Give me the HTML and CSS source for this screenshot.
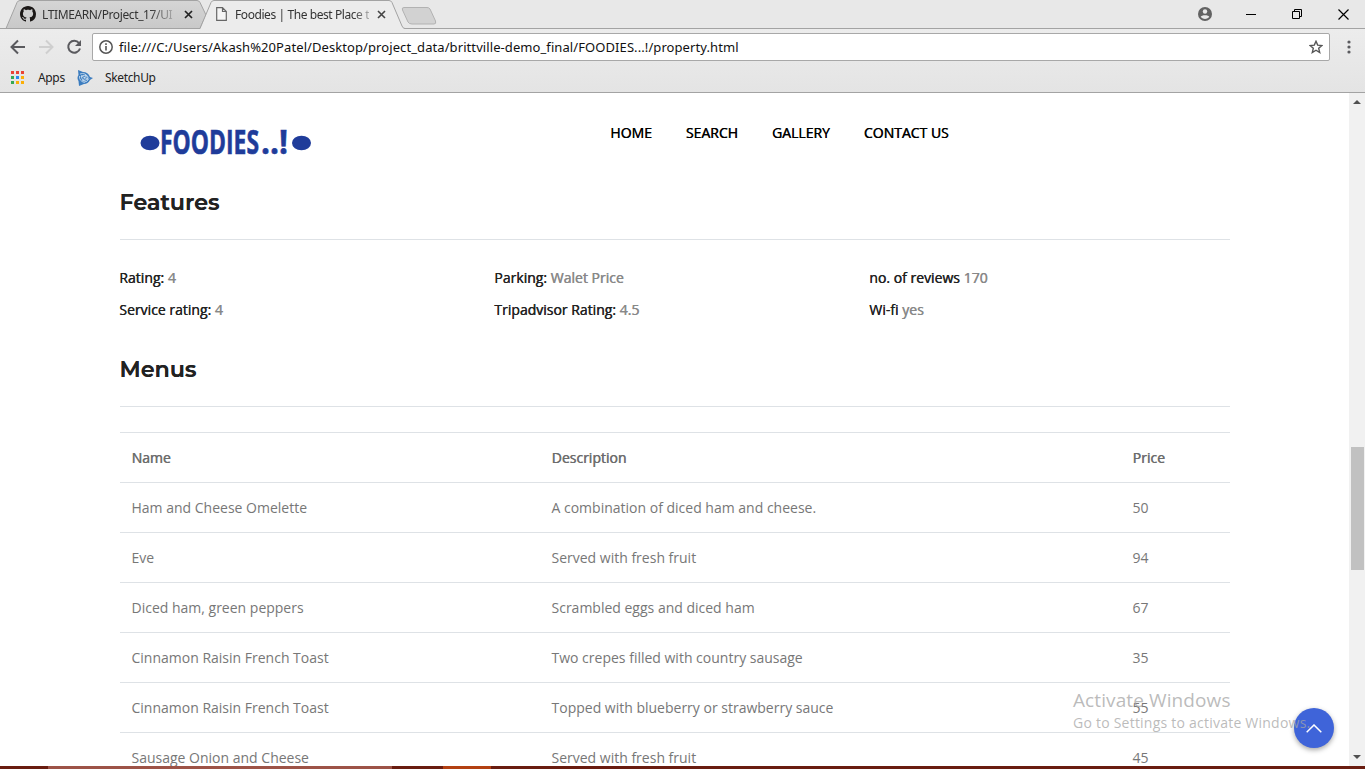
FILE: index.html
```html
<!DOCTYPE html>
<html lang="en">
<head>
<meta charset="utf-8">
<title>Foodies | The best Place to eat</title>
<link rel="stylesheet" href="styles.css">
</head>
<body>
<div class="browser">
  <div class="tabstrip">
    <svg class="tab-shapes" width="450" height="29" viewBox="0 0 450 29">
      <defs><linearGradient id="idle" x1="0" y1="0" x2="0" y2="1"><stop offset="0" stop-color="#d5d5d5"/><stop offset="1" stop-color="#c9c9c9"/></linearGradient></defs>
      <path d="M0 28.500H450" stroke="#a3a3a3"/>
      <path d="M6 28.500L17 2.500Q18 .5 20 .5H197Q199 .5 200 2.500L206 15L200 28.500Z" fill="url(#idle)" stroke="#a3a3a3"/>
      <path d="M200 29L211 2.500Q212 .5 214 .5H389Q391 .5 392 2.500L402 26Q403 28.500 405 29Z" fill="#ececec"/>
      <path d="M200 28.500L211 2.500Q212 .5 214 .5H389Q391 .5 392 2.500L402 26Q403 28.500 405 28.500" fill="none" stroke="#a3a3a3"/>
      <path d="M404 7.500H427Q429 7.500 430 9L435.500 21Q436.500 24 434 24H412Q409 24 408 22L402.500 10Q401.500 7.500 404 7.500Z" fill="#d2d2d2" stroke="#b2b2b2"/>
    </svg>
    <div class="tab tab-idle">
      <svg width="16" height="16" viewBox="0 0 16 16"><path fill="#1b1817" d="M8 0C3.580 0 0 3.580 0 8c0 3.540 2.290 6.530 5.470 7.590.4.070.55-.17.55-.38 0-.19-.01-.82-.01-1.490-2.010.37-2.530-.49-2.690-.94-.09-.23-.48-.94-.82-1.130-.28-.15-.68-.52-.01-.53.63-.01 1.080.58 1.230.82.72 1.210 1.870.87 2.330.66.070-.52.28-.87.510-1.070-1.780-.2-3.640-.89-3.640-3.950 0-.87.310-1.590.82-2.150-.08-.2-.36-1.020.080-2.120 0 0 .67-.21 2.200.82.64-.18 1.320-.27 2-.27s1.360.090 2 .27c1.530-1.040 2.200-.82 2.200-.82.440 1.100.160 1.920.080 2.120.510.560.820 1.270.820 2.150 0 3.070-1.870 3.750-3.650 3.950.290.250.540.730.540 1.480 0 1.070-.01 1.930-.01 2.200 0 .21.150.46.550.38A8.010 8.010 0 0 0 16 8c0-4.420-3.580-8-8-8z"/></svg>
      <span class="tab-title t1">LTIMEARN/Project_17/UI</span>
      <svg class="x" width="9" height="9" viewBox="0 0 9 9"><path d="M1 1L8 8M8 1L1 8" stroke="#222" stroke-width="1.700"/></svg>
    </div>
    <div class="tab tab-active">
      <svg width="11" height="14" viewBox="0 0 11 14"><path d="M.7.700H6.500L10.300 4.500V13.300H.7ZM6.500.700V4.500H10.300" fill="#f5f5f5" stroke="#666" stroke-width="1.200"/></svg>
      <span class="tab-title t2">Foodies | The best Place t</span>
      <svg class="x" width="9" height="9" viewBox="0 0 9 9"><path d="M1 1L8 8M8 1L1 8" stroke="#444" stroke-width="1.600"/></svg>
    </div>
    <div class="window-buttons">
      <svg width="14" height="14" viewBox="0 0 14 14"><circle cx="7" cy="7" r="7" fill="#626262"/><circle cx="7" cy="4.500" r="2.200" fill="#e8e8e8"/><path d="M2.700 10C3 7.500 11 7.500 11.300 10Q7 14 2.700 10Z" fill="#e8e8e8"/></svg>
      <svg class="min" width="10" height="11" viewBox="0 0 10 11"><path d="M0 5.500H10" stroke="#000"/></svg>
      <svg width="11" height="11" viewBox="0 0 11 11"><path d="M.5 2.500H7.500V9.500H.5ZM2.500 2.500V.5H9.500V7.500H7.500" fill="none" stroke="#000"/></svg>
      <svg width="11" height="11" viewBox="0 0 11 11"><path d="M.5.500L10.500 10.500M10.500.500L.5 10.500" stroke="#000" stroke-width="1.200"/></svg>
    </div>
  </div>
  <div class="toolbar">
    <svg class="nav-icons" width="92" height="34" viewBox="0 0 92 34">
      <path d="M25 18H12M18 11.500L11.500 18L18 24.500" fill="none" stroke="#5a5a5e" stroke-width="2"/>
      <path d="M39 18H52M46 11.500L52.500 18L46 24.500" fill="none" stroke="#cfcfcf" stroke-width="2"/>
      <path d="M79 14A6 6 0 1 0 80 19.500" fill="none" stroke="#5a5a5e" stroke-width="2"/><path d="M81 11V17H75Z" fill="#5a5a5e"/>
    </svg>
    <div class="address">
      <svg width="14" height="14" viewBox="0 0 14 14"><circle cx="7" cy="7" r="6.200" fill="none" stroke="#555" stroke-width="1.500"/><path d="M7 6V10.500M7 3.300V5" stroke="#555" stroke-width="1.600"/></svg>
      <span class="url">file:///C:/Users/Akash%20Patel/Desktop/project_data/brittville-demo_final/FOODIES...!/property.html</span>
      <svg class="star" width="14" height="14" viewBox="0 0 14 14"><path d="M7 1.300L8.700 5.100L12.900 5.500L9.700 8.300L10.700 12.500L7 10.200L3.300 12.500L4.300 8.300L1.100 5.500L5.300 5.100Z" fill="none" stroke="#555" stroke-width="1.400"/></svg>
    </div>
    <svg class="dots" width="4" height="14" viewBox="0 0 4 14"><circle cx="2" cy="2" r="1.600" fill="#5a5a5e"/><circle cx="2" cy="7" r="1.600" fill="#5a5a5e"/><circle cx="2" cy="12" r="1.600" fill="#5a5a5e"/></svg>
  </div>
  <div class="bookmarks">
    <svg width="13" height="13" viewBox="0 0 13 13"><path d="M0 0h3v3H0zM5 0h3v3H5zM10 0h3v3h-3z" fill="#ea4335"/><path d="M0 5h3v3H0zM0 10h3v3H0z" fill="#34a853"/><path d="M5 5h3v3H5z" fill="#2a8af0"/><path d="M5 10h3v3H5zM10 5h3v3h-3zM10 10h3v3h-3z" fill="#fbaf08"/></svg>
    <span class="bm apps">Apps</span>
    <svg class="su" width="16" height="16" viewBox="0 0 16 16"><path d="M1 0L6 2Q11 2 13 7L16 8L13 10Q11 14 7 14L2 16L1.500 11Q-.5 8 1.500 5Z" fill="#3b7cbf"/><path d="M3 4Q8 2 11.500 7.500M2.500 6Q2 11 7.500 12.500M12 8.500Q10 12.500 7 12M4 6L9 5L11 9L6 11ZM4 6L11 9M9 5L6 11" fill="none" stroke="#d4e4f3" stroke-width=".8"/></svg>
    <span class="bm">SketchUp</span>
  </div>
</div>
<div class="viewport">
  <main class="page">
    <header class="site-header">
      <svg class="logo" width="180" height="36" viewBox="0 0 180 36">
        <g fill="#1f3c9a"><ellipse cx="18" cy="18" rx="9.500" ry="7.300"/><ellipse cx="169.500" cy="18" rx="9.500" ry="7.300"/></g>
        <text class="logo-text" x="28" y="29" textLength="99" lengthAdjust="spacingAndGlyphs">FOODIES</text>
        <text class="logo-text" x="129" y="29" textLength="27" lengthAdjust="spacingAndGlyphs">..!</text>
      </svg>
      <nav class="menu"><a>HOME</a><a>SEARCH</a><a>GALLERY</a><a>CONTACT US</a></nav>
    </header>
    <h2 class="title">Features</h2>
    <div class="features">
      <div>Rating: <span>4</span></div><div>Parking: <span>Walet Price</span></div><div>no. of reviews <span>170</span></div>
      <div>Service rating: <span>4</span></div><div>Tripadvisor Rating: <span>4.5</span></div><div>Wi-fi <span>yes</span></div>
    </div>
    <h2 class="title">Menus</h2>
    <div class="menu-table">
      <div class="row head"><span>Name</span><span>Description</span><span>Price</span></div>
      <div class="row"><span>Ham and Cheese Omelette</span><span>A combination of diced ham and cheese.</span><span>50</span></div>
      <div class="row"><span>Eve</span><span>Served with fresh fruit</span><span>94</span></div>
      <div class="row"><span>Diced ham, green peppers</span><span>Scrambled eggs and diced ham</span><span>67</span></div>
      <div class="row"><span>Cinnamon Raisin French Toast</span><span>Two crepes filled with country sausage</span><span>35</span></div>
      <div class="row"><span>Cinnamon Raisin French Toast</span><span>Topped with blueberry or strawberry sauce</span><span>55</span></div>
      <div class="row"><span>Sausage Onion and Cheese</span><span>Served with fresh fruit</span><span>45</span></div>
    </div>
  </main>
  <div class="scrollbar">
    <svg width="8" height="4" viewBox="0 0 8 4"><path d="M0 4L4 0L8 4Z" fill="#505050"/></svg>
    <div class="thumb"></div>
    <svg class="down" width="8" height="4" viewBox="0 0 8 4"><path d="M0 0L4 4L8 0Z" fill="#505050"/></svg>
  </div>
</div>
<div class="taskbar"><i class="window-hint"></i><i class="active-hint"></i></div>
<div class="to-top"><svg width="16" height="9" viewBox="0 0 16 9"><path d="M.7 8.300L8 1L15.300 8.300" fill="none" stroke="#fff" stroke-width="1.500"/></svg></div>
<div class="watermark"><div class="w1">Activate Windows</div><div class="w2">Go to Settings to activate Windows.</div></div>
</body>
</html>
```
FILE: styles.css
```css
* { box-sizing: border-box; }
body { margin: 0; width: 1365px; height: 769px; overflow: hidden; position: relative; display: flex; flex-direction: column; background: #fff; font-family: "Open Sans", sans-serif; }
svg { display: block; flex: none; }
.browser { height: 93px; flex: none; border-bottom: 1px solid #a3a3a3; background: linear-gradient(#ececec 29px, #e4e4e4); white-space: nowrap; }
.tabstrip { height: 29px; display: flex; align-items: center; position: relative; border-bottom: 1px solid #a3a3a3; background: #e8e8e8; }
.tab-shapes { position: absolute; left: 0; top: 0; }
.tab { position: relative; display: flex; align-items: center; height: 29px; }
.tab-idle { width: 216px; padding-left: 20px; }
.tab-active { width: 200px; }
.tab-title { font-family: "Noto Sans", sans-serif; font-size: 12px; }
.t1 { margin-left: 6px; width: 131px; color: #333; letter-spacing: -.38px; mask-image: linear-gradient(90deg, #000 108px, transparent 138px); }
.t2 { margin-left: 8px; width: 134px; color: #333; letter-spacing: -.42px; mask-image: linear-gradient(90deg, #000 118px, transparent 142px); }
.x { margin-left: 11px; margin-top: 1px; }
.tab-active .x { margin-left: 8px; }
.window-buttons { margin-left: auto; display: flex; align-items: center; padding-right: 16px; gap: 35px; }
.min { margin-left: -1px; margin-right: 1px; }
.toolbar { height: 34px; display: flex; }
.address { margin-top: 4px; height: 28px; width: 1238px; display: flex; align-items: center; background: #fff; border: 1px solid #a8a8a8; border-radius: 2px; padding: 0 6px; }
.url { margin-left: 6px; font-family: "Noto Sans", sans-serif; font-size: 13px; color: #111; letter-spacing: .084px; }
.star { margin-left: auto; }
.dots { margin: 11px 0 0 17px; }
.bookmarks { display: flex; align-items: center; height: 29px; padding-left: 11px; }
.bm { font-family: "Noto Sans", sans-serif; font-size: 12px; color: #222; letter-spacing: -.35px; }
.apps { margin-left: 14px; width: 39px; }
.su { margin-right: 12px; }
.viewport { flex: none; height: 673px; display: flex; overflow: hidden; }
.page { width: 1349px; padding: 0 119px 0 120px; }
.site-header { height: 88px; display: flex; padding-top: 32px; }
.logo { margin-left: 12px; overflow: visible; }
.logo-text { font-family: "Open Sans", sans-serif; font-size: 34px; font-weight: 700; fill: #1f3c9a; stroke: #1f3c9a; stroke-width: .6px; }
.menu { margin-left: 298.2px; display: flex; gap: 34px; font-size: 14px; line-height: 16px; color: #000; text-shadow: .4px 0 0 #000; }
.title { margin: 0; height: 59px; border-bottom: 1px solid #dee2e6; font: 600 22px/44px Montserrat, "Inter", sans-serif; color: #222; letter-spacing: .15px; text-shadow: .3px 0 0 #222; text-indent: -.5px; }
.features { display: grid; grid-template-columns: 375px 375px 1fr; padding-top: 22px; height: 108px; grid-auto-rows: 32px; font-size: 14px; line-height: 32px; color: #222; text-shadow: .4px 0 0 currentColor; margin-left: -.8px; }
.features span { color: #888; text-shadow: .5px 0 0 #888; }
.menu-table { margin-top: 25px; }
.row { height: 50px; border-top: 1px solid #dee2e6; display: grid; grid-template-columns: 420px 581px 1fr; padding-left: 11.5px; font-size: 14px; line-height: 50px; color: #777; white-space: nowrap; }
.head { color: #6c6c6c; text-shadow: .5px 0 0 #6c6c6c; }
.scrollbar { width: 16px; background: #f1f1f1; display: flex; flex-direction: column; align-items: center; padding: 7px 0; }
.thumb { width: 13px; height: 123px; background: #c1c1c1; margin-top: 343px; }
.down { margin-top: auto; }
.taskbar { height: 3px; background: #691c10; display: flex; }
.window-hint { width: 344px; margin-left: 48px; background: #9d5347; }
.active-hint { width: 48px; margin-left: 51px; background: #b34012; }
.to-top { position: absolute; left: 1294px; top: 708px; width: 40px; height: 40px; border-radius: 50%; background: #3f64d9; box-shadow: 0 2px 5px rgba(0,0,0,.35); display: flex; align-items: center; justify-content: center; }
.watermark { position: absolute; left: 1073px; top: 688px; color: rgba(165,165,165,.75); white-space: nowrap; }
.w1 { font-size: 19px; line-height: 25px; letter-spacing: .1px; }
.w2 { font-size: 14px; line-height: 20px; letter-spacing: .23px; }
```
